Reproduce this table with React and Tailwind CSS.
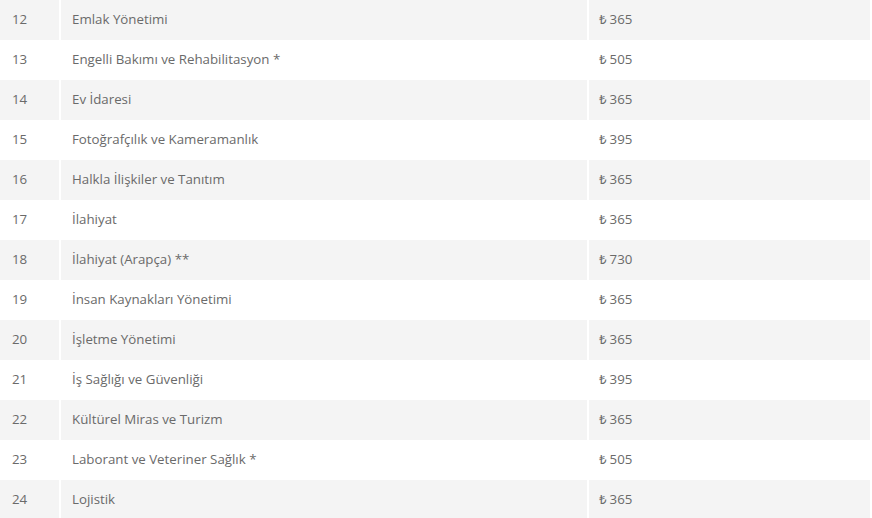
const rows = [
  [12, 'Emlak Yönetimi', '365'],
  [13, 'Engelli Bakımı ve Rehabilitasyon *', '505'],
  [14, 'Ev İdaresi', '365'],
  [15, 'Fotoğrafçılık ve Kameramanlık', '395'],
  [16, 'Halkla İlişkiler ve Tanıtım', '365'],
  [17, 'İlahiyat', '365'],
  [18, 'İlahiyat (Arapça) **', '730'],
  [19, 'İnsan Kaynakları Yönetimi', '365'],
  [20, 'İşletme Yönetimi', '365'],
  [21, 'İş Sağlığı ve Güvenliği', '395'],
  [22, 'Kültürel Miras ve Turizm', '365'],
  [23, 'Laborant ve Veteriner Sağlık *', '505'],
  [24, 'Lojistik', '365'],
];

export default function App() {
  return (
    <div className="w-[872px] h-[518px] overflow-hidden bg-white text-[13.3px] text-[#6a6a6a]"
         style={{ fontFamily: '"Open Sans", "Noto Sans", sans-serif' }}>
      {rows.map(([no, name, price], i) => {
        const cell = i % 2 === 0 ? 'bg-[#f4f4f4]' : 'bg-white';
        return (
          <div key={no} className="grid grid-cols-[59px_526px_281px] gap-x-[2px] h-10 w-[870px]">
            <div className={`flex items-center pl-3 ${cell}`}>{no}</div>
            <div className={`flex items-center pl-[11px] ${cell}`}>{name}</div>
            <div className={`flex items-center pl-[10px] ${cell}`}>
              <span className="mr-[3px]">₺</span>{price}
            </div>
          </div>
        );
      })}
    </div>
  );
}
